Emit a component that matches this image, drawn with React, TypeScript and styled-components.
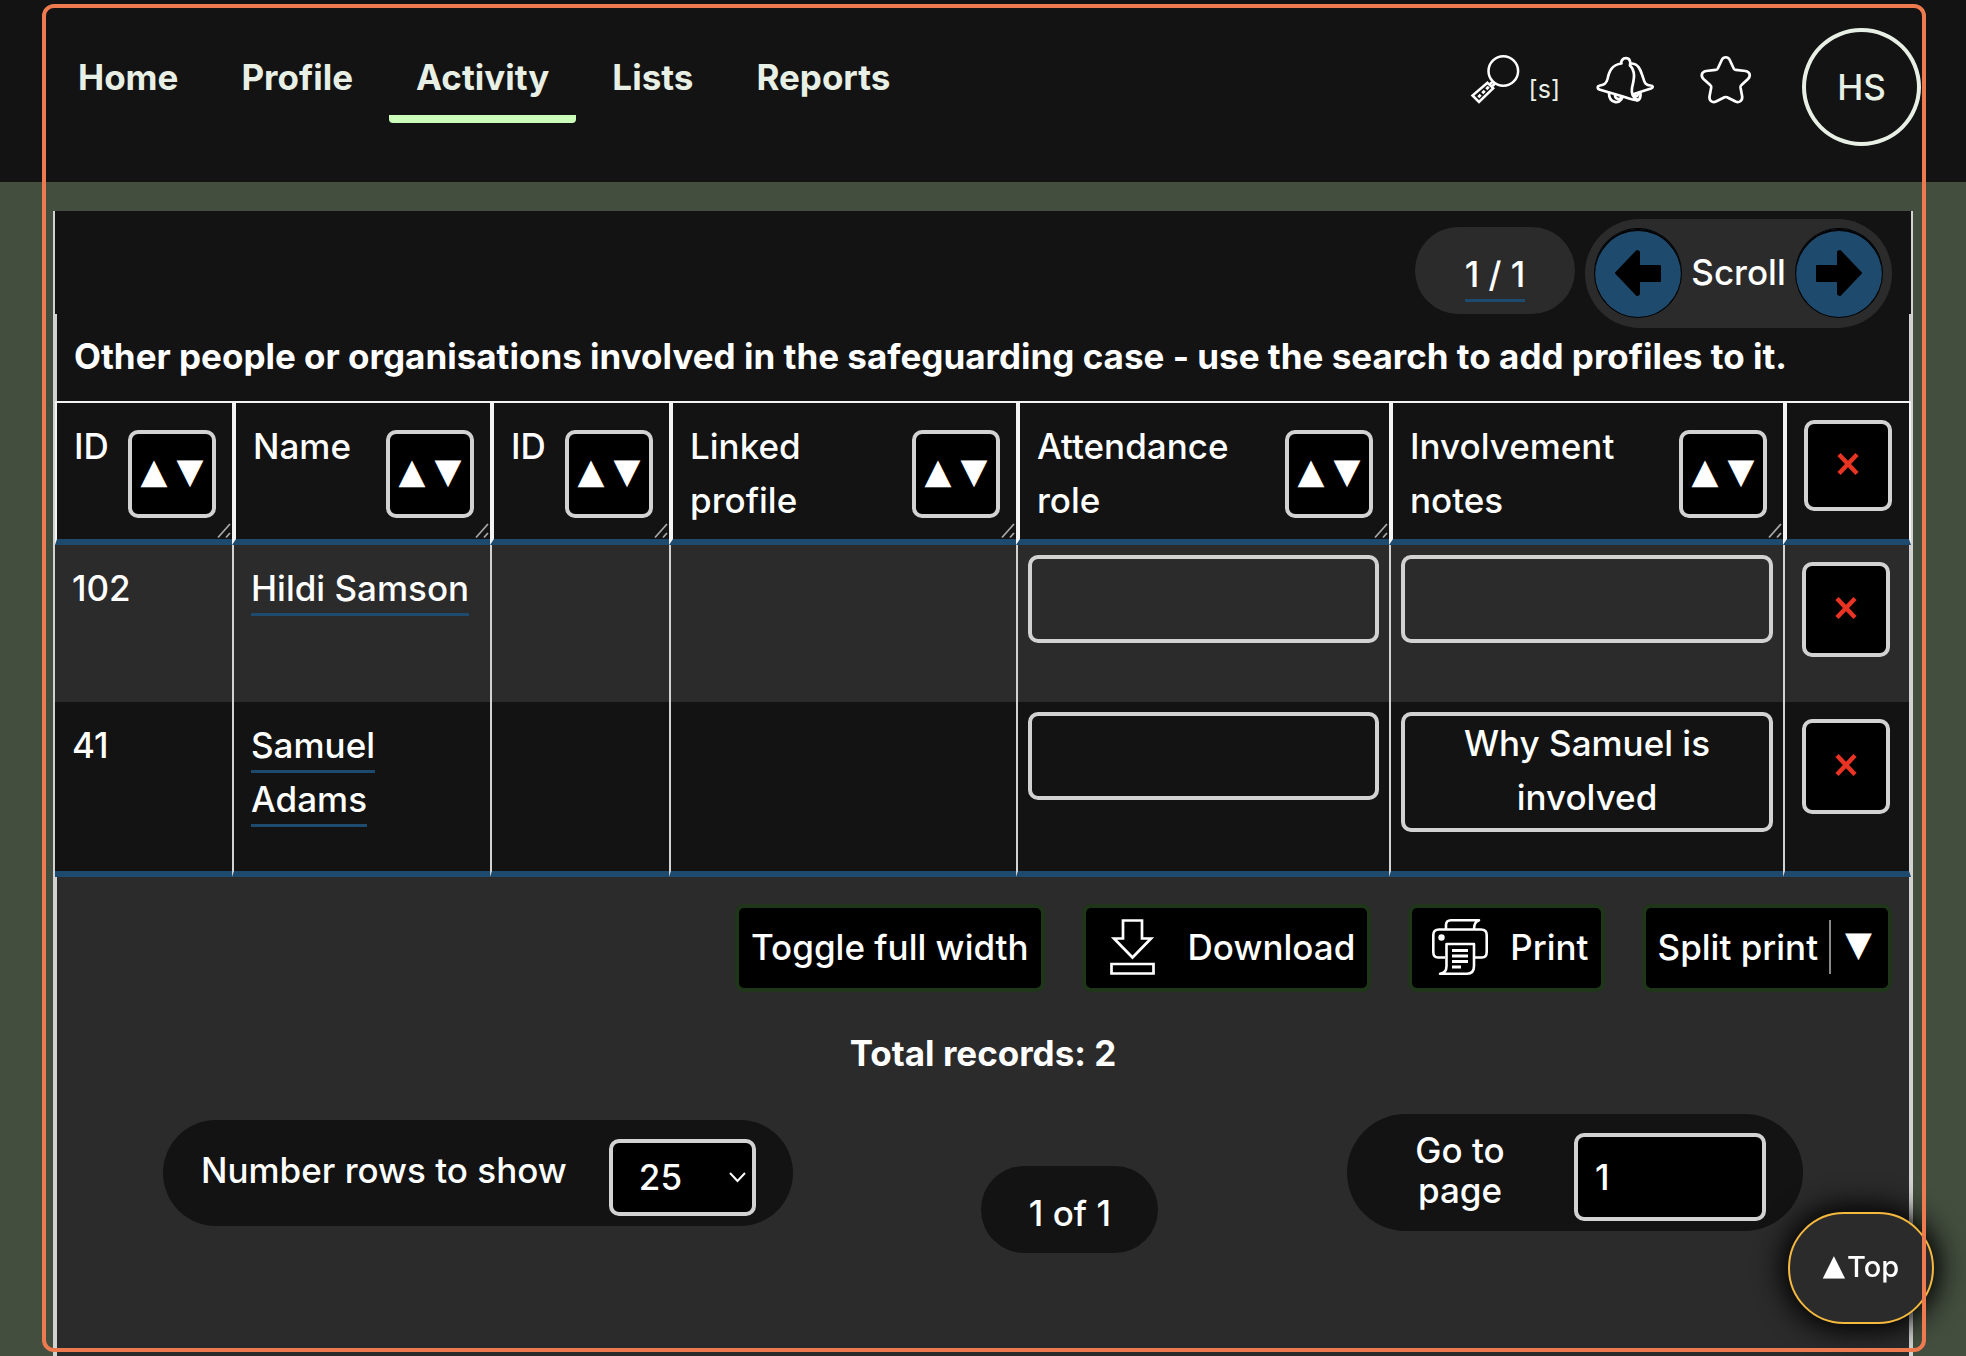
import React, { useState } from "react";
import styled, { createGlobalStyle } from "styled-components";

const color = {
  ink: "#131313",
  panel: "#2b2b2b",
  moss: "#434e3e",
  line: "#d2d2d2",
  rule: "#f3f3f3",
  blue: "#1e4a6d",
  text: "#ffffff",
  navText: "#e8efe4",
  lime: "#ccffbb",
  coral: "#ee7b4f",
  red: "#e93323",
  forest: "#1f361a",
  amber: "#f4b93e",
};

const GlobalStyle = createGlobalStyle`
  *, *::before, *::after { box-sizing: border-box; }
  body {
    margin: 0;
    background: ${color.moss};
    color: ${color.text};
    font-family: Inter, "Liberation Sans", sans-serif;
    font-size: 35px;
    font-weight: 500;
    line-height: 54px;
  }
  button, input, select, textarea { font: inherit; color: inherit; margin: 0; }
  svg { display: block; flex: none; overflow: visible; }
`;

const Page = styled.div`
  display: flex;
  flex-direction: column;
  height: 100vh;
  overflow: hidden;
`;

const FocusFrame = styled.div`
  position: fixed;
  inset: 4px 40px 4px 42px;
  border: 4px solid ${color.coral};
  border-radius: 12px;
  pointer-events: none;
  z-index: 10;
`;

const Header = styled.header`
  display: flex;
  justify-content: space-between;
  align-items: flex-start;
  flex: none;
  height: 182px;
  padding: 28px 45px 0 51px;
  background: ${color.ink};
  color: ${color.navText};
`;

const Nav = styled.nav`
  display: flex;
  gap: 9px;
  padding-top: 22px;
  font-weight: 700;
`;

const NavLink = styled.a<{ $active?: boolean }>`
  display: flex;
  flex-direction: column;
  gap: 11px;
  color: inherit;
  text-decoration: none;

  span { padding: 0 27px; }
  &::after {
    content: "";
    height: 8px;
    border-radius: 0 0 4px 4px;
    background: ${(p) => (p.$active ? color.lime : "transparent")};
  }
`;

const Actions = styled.div`
  display: flex;
  align-items: flex-start;
  gap: 36px;
`;

const IconLink = styled.a`
  display: flex;
  align-items: center;
  gap: 3px;
  height: 60px;
  margin-top: 17px;
  color: inherit;
  font-size: 25px;
  font-weight: 400;
  text-decoration: none;

  svg { color: #ffffff; }
  span { padding-top: 28px; }
`;

const Avatar = styled.button`
  width: 119px;
  height: 118px;
  margin-left: 10px;
  padding: 0;
  border: 4px solid ${color.navText};
  border-radius: 50%;
  background: transparent;
`;

const Card = styled.main`
  display: flex;
  flex-direction: column;
  flex: 1;
  margin: 29px 53px 0;
  border: solid ${color.line};
  border-width: 0 2px;
  background: ${color.ink};
`;

const ScrollBar = styled.div`
  display: flex;
  justify-content: flex-end;
  align-items: flex-start;
  gap: 10px;
  height: 103px;
  padding: 8px 19px 0 0;
`;

const PagePill = styled.div`
  display: flex;
  align-items: center;
  justify-content: center;
  width: 160px;
  height: 87px;
  margin-top: 8px;
  padding-top: 7px;
  border-radius: 44px;
  background: ${color.panel};
`;

const InkLink = styled.a`
  padding-bottom: 4px;
  border-bottom: 3px solid ${color.blue};
  color: inherit;
  text-decoration: none;
`;

const ScrollPill = styled.div`
  display: flex;
  align-items: center;
  justify-content: space-between;
  width: 307px;
  height: 109px;
  padding: 0 9px 2px;
  border-radius: 55px;
  background: ${color.panel};

  span { padding-bottom: 2px; }
`;

const RoundButton = styled.button`
  display: grid;
  place-items: center;
  width: 88px;
  height: 90px;
  padding: 0;
  border: 1px solid #000000;
  border-radius: 50%;
  background: ${color.blue};
  box-shadow: inset 0 2px 0 #000000;
  color: #000000;
`;

const Table = styled.table`
  width: 100%;
  table-layout: fixed;
  border-collapse: separate;
  border-spacing: 0;
`;

const Caption = styled.caption`
  padding: 15px 17px 18px;
  border: solid ${color.line};
  border-width: 0 2px;
  font-weight: 700;
  text-align: left;
  white-space: nowrap;
`;

const HeadCell = styled.th<{ $action?: boolean }>`
  position: relative;
  height: 144px;
  padding: ${(p) => (p.$action ? "17px 14px 0 17px" : "0 16px 0 17px")};
  border-top: 2px solid ${color.rule};
  border-bottom: 6px solid ${color.blue};
  border-left: 4px solid ${color.rule};
  font-weight: inherit;
  text-align: left;
  vertical-align: top;

  &:first-child { border-left-width: 2px; }
  &:last-child { border-right: 2px solid ${color.rule}; }
`;

const HeadInner = styled.div`
  display: flex;
  justify-content: space-between;
  padding-top: 16px;
`;

const Grip = styled.svg`
  position: absolute;
  right: 1px;
  bottom: 1px;
`;

const SortButton = styled.button`
  display: flex;
  align-items: center;
  justify-content: center;
  gap: 9px;
  flex: none;
  width: 88px;
  height: 88px;
  margin-top: 11px;
  padding: 0 0 6px;
  border: 4px solid ${color.line};
  border-radius: 10px;
  background: #000000;
  font-family: "DejaVu Sans", sans-serif;
`;

const RemoveButton = styled.button<{ $tall?: boolean }>`
  display: grid;
  place-items: center;
  width: 88px;
  height: ${(p) => (p.$tall ? 95 : 91)}px;
  padding: 0 0 3px;
  border: 4px solid ${color.line};
  border-radius: 10px;
  background: #000000;
  color: ${color.red};
`;

const BodyRow = styled.tr`
  height: 157px;
  background: ${color.panel};

  & + & { background: ${color.ink}; }
  &:last-child td { border-bottom: 6px solid ${color.blue}; }
`;

const Cell = styled.td<{ $kind?: "field" | "action" }>`
  padding: ${(p) =>
    p.$kind === "field" ? "10px 10px 39px" : p.$kind === "action" ? "17px 16px 0 17px" : "16px 16px 0 17px"};
  border-left: 2px solid ${color.line};
  vertical-align: top;

  &:first-child { border-left: 0; }
  &:last-child { border-right: 2px solid ${color.line}; }
`;

const Field = styled.textarea<{ $double?: boolean }>`
  display: block;
  width: 100%;
  height: ${(p) => (p.$double ? 120 : 88)}px;
  padding: 0 40px;
  border: 4px solid ${color.line};
  border-radius: 10px;
  background: transparent;
  text-align: center;
  resize: none;
  overflow: hidden;
`;

const Footer = styled.section`
  flex: 1;
  border: solid ${color.line};
  border-width: 0 2px;
  background: ${color.panel};
`;

const ButtonBar = styled.div`
  display: flex;
  justify-content: flex-end;
  gap: 37px;
  padding: 27px 17px 0;
`;

const ToolButton = styled.button`
  display: flex;
  align-items: center;
  justify-content: space-between;
  height: 88px;
  padding: 0 12px 2px;
  border: 4px solid ${color.forest};
  border-radius: 9px;
  background: #000000;
  white-space: nowrap;
`;

const ToolIcon = styled.svg`
  margin: 0 22px 0 8px;
`;

const SplitMark = styled.span`
  height: 54px;
  margin-left: 11px;
  padding: 0 4px 0 14px;
  border-left: 2px solid #888888;
  font-family: "DejaVu Sans", sans-serif;
  line-height: 48px;
`;

const Total = styled.p`
  margin: 0;
  padding: 34px 0;
  font-weight: 700;
  text-align: center;
`;

const Pager = styled.div`
  display: flex;
  justify-content: space-between;
  align-items: flex-start;
  padding: 0 106px;
`;

const Pill = styled.div<{ $drop?: number }>`
  display: flex;
  align-items: center;
  margin-top: ${(p) => p.$drop ?? 0}px;
  border-radius: 59px;
  background: ${color.ink};
`;

const RowsPill = styled(Pill)`
  height: 106px;
  padding: 8px 37px 0 38px;
  gap: 42px;

  label { padding-bottom: 14px; }
`;

const CountPill = styled(Pill)`
  justify-content: center;
  width: 177px;
  height: 87px;
  padding-top: 6px;
`;

const GoPill = styled(Pill)`
  height: 117px;
  padding: 12px 37px 4px 48px;

  label {
    width: 130px;
    margin-right: 49px;
    padding-bottom: 13px;
    line-height: 40px;
    text-align: center;
  }
`;

const SelectBox = styled.span`
  display: grid;
  align-items: center;

  select, svg { grid-area: 1 / 1; }
  svg { justify-self: end; margin-right: 10px; pointer-events: none; }
`;

const Select = styled.select`
  appearance: none;
  width: 147px;
  height: 77px;
  padding: 0 26px;
  border: 4px solid ${color.line};
  border-radius: 10px;
  background: #000000;
`;

const PageInput = styled.input`
  width: 192px;
  height: 88px;
  padding: 0 17px;
  border: 4px solid ${color.line};
  border-radius: 10px;
  background: #000000;
`;

const TopButton = styled.a`
  position: fixed;
  right: 32px;
  bottom: 32px;
  display: flex;
  align-items: center;
  justify-content: center;
  gap: 2px;
  width: 146px;
  height: 112px;
  padding-bottom: 2px;
  border: 2px solid ${color.amber};
  border-radius: 56px;
  background: ${color.panel};
  box-shadow: 0 0 28px 6px #000000;
  color: inherit;
  font-size: 29px;
  text-decoration: none;
`;

const Glyph = styled.span`
  padding-bottom: 4px;
  font-family: "DejaVu Sans", sans-serif;
`;

const SearchIcon = () => (
  <svg width="60" height="60" viewBox="0 0 60 60" fill="none" stroke="currentColor" strokeWidth="2.500" aria-hidden="true">
    <circle cx="37.3" cy="26" r="14.8" />
    <path d="M27 36.5 L23 40 M29 38.5 L25 42.5 M21.5 37.8 L27.2 43.2 L13 57 L6.5 50.5 Z" />
    <path d="M20.500 42 L22.5 44 M16.5 46 L18.5 48 M12.500 50 L14.500 52" strokeWidth="3.500" />
  </svg>
);

const BellIcon = () => (
  <svg width="62" height="60" viewBox="1 0 62 60" fill="none" stroke="currentColor" strokeWidth="2.700" strokeLinecap="round" strokeLinejoin="round" aria-hidden="true">
    <path d="M26.5 18.5 C25.5 16.5 27.5 13.2 31 13.2 C34.5 13.2 36 16.5 35 20.5 C41.5 27 38.5 36 37 43 C36 49 38 53 43 55 C38 55.5 33 53 28 51.5 L5 44.8 C2 44 2 41 5 40.5 C10 40 11.5 38 12.5 34 C14 27 16.5 19.5 26.5 18.5 Z" />
    <path d="M36 18.5 C44.5 18.5 46 27 48 32.5 C49.500 38 51 40.5 55.5 40.5 C58 40.5 58.500 42.500 56 43.500 L38 49.2" />
    <path d="M14 48 C14 58.500 25 60 27.500 52 M20 49.500 C20 55 25 55 27 52 M45.500 47.500 C46 53 44.500 55 42 55.500 M39 49.500 C41 52 42.500 52 43 48.500" />
  </svg>
);

const StarIcon = () => (
  <svg width="62" height="60" viewBox="-4 0 62 60" fill="none" stroke="currentColor" strokeWidth="2.700" strokeLinejoin="round" aria-hidden="true">
    <path d="M24 14.500 C25.500 11.500 30 11.500 31.500 14.500 L35.700 23.500 Q36.300 24.700 37.800 24.900 L47.500 26 C52 26.800 53 31 50 34 L43.500 40 Q42.300 41 42.500 42.500 L44.200 51.500 C44.500 56 41 58 37.500 56.500 L29 52.300 Q27.800 51.700 26.500 52.300 L18 56.500 C14.500 58 11 56 11.500 51.500 L13.200 42.500 Q13.500 41 12.200 40 L5.500 34 C2.500 31 3.500 26.800 8 26 L17.700 24.900 Q19.200 24.700 19.800 23.500 Z" />
  </svg>
);

const ArrowIcon = ({ flip }: { flip?: boolean }) => (
  <svg width="46" height="46" viewBox="0 0 46 46" fill="currentColor" stroke="currentColor" strokeWidth="2" strokeLinejoin="round" aria-hidden="true">
    <path d={flip ? "M45 23 L24 45 L22 44 V31 H1 V16 H22 V2 L24 1 Z" : "M1 23 L22 1 L24 2 V16 H45 V31 H24 V44 L22 45 Z"} />
  </svg>
);

const CrossIcon = () => (
  <svg width="22" height="22" viewBox="0 0 22 22" stroke="currentColor" strokeWidth="4.500" aria-hidden="true">
    <path d="M2 1.500 L20 20.500 M20 1.500 L2 20.500" />
  </svg>
);

const DownloadIcon = () => (
  <ToolIcon width="60" height="56" viewBox="-4 0 60 56" fill="none" stroke="currentColor" strokeWidth="2.700" aria-hidden="true">
    <path d="M13 1.500 H32 V19.500 H41 L22.500 38.500 L4 19.500 H13 Z M1.500 45 H43.500 V54.500 H1.500 Z" />
  </ToolIcon>
);

const PrinterIcon = () => (
  <ToolIcon width="56" height="56" viewBox="0 0 56 56" fill="none" stroke="currentColor" strokeWidth="2.600" strokeLinejoin="round" aria-hidden="true">
    <path d="M14 10 V6 Q14 1.300 19 1.300 H47 Q42 3 42 10 M13 38.500 H6 Q1.300 38.500 1.300 33 V16 Q1.300 10.500 7 10.500 H49 Q54.700 10.500 54.700 16 V33 Q54.700 38.500 50 38.500 H42" />
    <path d="M8 54.700 Q14.500 54 14.500 47 V25 H42 V47 Q42 54.700 35 54.700 Z" />
    <path d="M20 31.500 H36 M20 37 H36 M20 42.500 H36 M20 48 H29" strokeWidth="3" />
    <circle cx="9.500" cy="18.500" r="3.200" fill="currentColor" stroke="none" />
  </ToolIcon>
);

const GripIcon = () => (
  <Grip width="14" height="15" viewBox="0 0 14 15" stroke="#a5a5a5" strokeWidth="1.800" aria-hidden="true">
    <path d="M1 14.500 L13 1 M9 14.500 L13 10" />
  </Grip>
);

const navItems = ["Home", "Profile", "Activity", "Lists", "Reports"];

const columns = [
  { label: "ID", width: 177 },
  { label: "Name", width: 258 },
  { label: "ID", width: 179 },
  { label: "Linked profile", width: 347 },
  { label: "Attendance role", width: 373 },
  { label: "Involvement notes", width: 394 },
];

const people = [
  { id: 102, name: "Hildi Samson", notes: "" },
  { id: 41, name: "Samuel Adams", notes: "Why Samuel is involved" },
];

export default function App() {
  const [rows, setRows] = useState("25");
  const [page, setPage] = useState("1");

  return (
    <>
      <GlobalStyle />
      <Page>
        <Header>
          <Nav>
            {navItems.map((item) => (
              <NavLink key={item} href="#" $active={item === "Activity"}>
                <span>{item}</span>
              </NavLink>
            ))}
          </Nav>
          <Actions>
            <IconLink href="#" aria-label="Search">
              <SearchIcon />
              <span>[s]</span>
            </IconLink>
            <IconLink href="#" aria-label="Notifications"><BellIcon /></IconLink>
            <IconLink href="#" aria-label="Favourites"><StarIcon /></IconLink>
            <Avatar>HS</Avatar>
          </Actions>
        </Header>

        <Card>
          <ScrollBar>
            <PagePill>
              <span><InkLink href="#">1 / 1</InkLink></span>
            </PagePill>
            <ScrollPill>
              <RoundButton aria-label="Scroll left"><ArrowIcon /></RoundButton>
              <span>Scroll</span>
              <RoundButton aria-label="Scroll right"><ArrowIcon flip /></RoundButton>
            </ScrollPill>
          </ScrollBar>

          <Table>
            <Caption>
              Other people or organisations involved in the safeguarding case - use the search to add profiles to it.
            </Caption>
            <colgroup>
              {columns.map((c, i) => <col key={i} style={{ width: c.width }} />)}
              <col style={{ width: 128 }} />
            </colgroup>
            <thead>
              <tr>
                {columns.map((c, i) => (
                  <HeadCell key={i} scope="col">
                    <HeadInner>
                      <span>{c.label}</span>
                      <SortButton aria-label={`Sort by ${c.label}`}>
                        <span>▲</span>
                        <span>▼</span>
                      </SortButton>
                    </HeadInner>
                    <GripIcon />
                  </HeadCell>
                ))}
                <HeadCell scope="col" $action>
                  <RemoveButton aria-label="Remove all"><CrossIcon /></RemoveButton>
                </HeadCell>
              </tr>
            </thead>
            <tbody>
              {people.map((p) => (
                <BodyRow key={p.id}>
                  <Cell>{p.id}</Cell>
                  <Cell><InkLink href="#">{p.name}</InkLink></Cell>
                  <Cell />
                  <Cell />
                  <Cell $kind="field"><Field aria-label={`Attendance role of ${p.name}`} /></Cell>
                  <Cell $kind="field">
                    <Field aria-label={`Involvement notes for ${p.name}`} defaultValue={p.notes} $double={p.notes !== ""} />
                  </Cell>
                  <Cell $kind="action">
                    <RemoveButton $tall aria-label={`Remove ${p.name}`}><CrossIcon /></RemoveButton>
                  </Cell>
                </BodyRow>
              ))}
            </tbody>
          </Table>

          <Footer>
            <ButtonBar>
              <ToolButton>Toggle full width</ToolButton>
              <ToolButton><DownloadIcon />Download</ToolButton>
              <ToolButton><PrinterIcon />Print</ToolButton>
              <ToolButton>Split print<SplitMark>▼</SplitMark></ToolButton>
            </ButtonBar>
            <Total>Total records: 2</Total>
            <Pager>
              <RowsPill $drop={6}>
                <label htmlFor="rows">Number rows to show</label>
                <SelectBox>
                  <Select id="rows" value={rows} onChange={(e) => setRows(e.target.value)}>
                    <option>25</option>
                    <option>50</option>
                    <option>100</option>
                  </Select>
                  <svg width="17" height="10" viewBox="0 0 17 10" fill="none" stroke="currentColor" strokeWidth="2" aria-hidden="true">
                    <path d="M1 1 L8.500 9 L16 1" />
                  </svg>
                </SelectBox>
              </RowsPill>
              <CountPill $drop={52}>1 of 1</CountPill>
              <GoPill>
                <label htmlFor="page">Go to page</label>
                <PageInput id="page" value={page} onChange={(e) => setPage(e.target.value)} />
              </GoPill>
            </Pager>
          </Footer>
        </Card>
      </Page>
      <TopButton href="#"><Glyph>▲</Glyph>Top</TopButton>
      <FocusFrame />
    </>
  );
}
